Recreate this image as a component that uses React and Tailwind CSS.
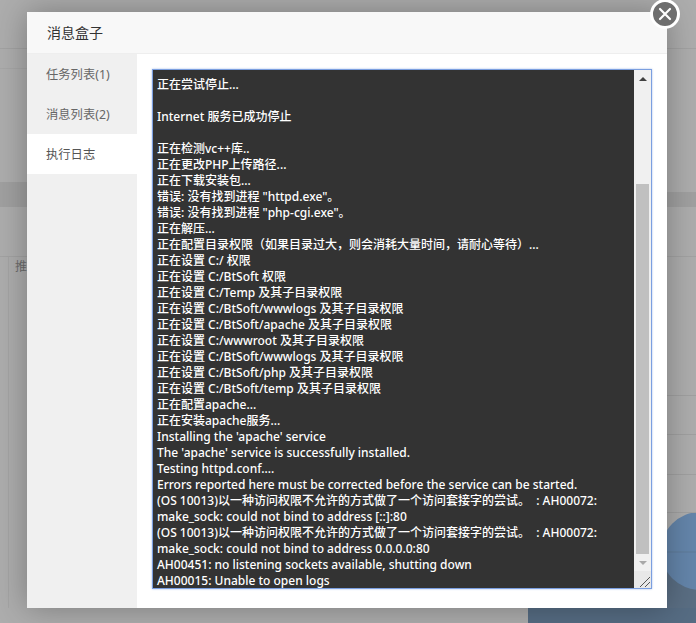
const lines = [
  "正在尝试停止...",
  "",
  "Internet 服务已成功停止",
  "",
  "正在检测vc++库..",
  "正在更改PHP上传路径...",
  "正在下载安装包...",
  "错误: 没有找到进程 \"httpd.exe\"。",
  "错误: 没有找到进程 \"php-cgi.exe\"。",
  "正在解压...",
  "正在配置目录权限（如果目录过大，则会消耗大量时间，请耐心等待）...",
  "正在设置 C:/ 权限",
  "正在设置 C:/BtSoft 权限",
  "正在设置 C:/Temp 及其子目录权限",
  "正在设置 C:/BtSoft/wwwlogs 及其子目录权限",
  "正在设置 C:/BtSoft/apache 及其子目录权限",
  "正在设置 C:/wwwroot 及其子目录权限",
  "正在设置 C:/BtSoft/wwwlogs 及其子目录权限",
  "正在设置 C:/BtSoft/php 及其子目录权限",
  "正在设置 C:/BtSoft/temp 及其子目录权限",
  "正在配置apache...",
  "正在安装apache服务...",
  "Installing the 'apache' service",
  "The 'apache' service is successfully installed.",
  "Testing httpd.conf....",
  "Errors reported here must be corrected before the service can be started.",
  "(OS 10013)以一种访问权限不允许的方式做了一个访问套接字的尝试。  : AH00072:",
  "make_sock: could not bind to address [::]:80",
  "(OS 10013)以一种访问权限不允许的方式做了一个访问套接字的尝试。  : AH00072:",
  "make_sock: could not bind to address 0.0.0.0:80",
  "AH00451: no listening sockets available, shutting down",
  "AH00015: Unable to open logs",
];

function Backdrop() {
  return (
    <div className="flex h-full flex-col">
      <div className="flex min-h-0 flex-1 justify-between">
        <div className="flex w-[27px] flex-col">
          <div className="h-[49px] shrink-0 border-b border-[#a2a2a2]" />
          <div className="h-[20px] shrink-0 border-b border-[#a6a6a6]" />
          <div className="h-[113px] shrink-0" />
          <div className="h-[25px] shrink-0 bg-[#a0a0a0]" />
          <div className="h-[50px] shrink-0 border-b border-[#a2a2a2]" />
          <div className="flex flex-1">
            <div className="w-[9px] shrink-0 border-r border-[#a4a4a4]" />
            <div className="overflow-hidden whitespace-nowrap pl-[6px] pt-[1px] text-[12px] text-[#6c6c6c]">推</div>
          </div>
        </div>
        <div className="flex w-[29px] flex-col">
          <div className="h-[49px] shrink-0 border-b border-[#a2a2a2]" />
          <div className="h-[143px] shrink-0" />
          <div className="h-[15px] shrink-0 bg-[#a0a0a0]" />
          <div className="h-[50px] shrink-0 border-b border-[#a2a2a2]" />
          <div className="h-[139px] shrink-0 border-b border-[#a0a0a0]" />
          <div className="h-[39px] shrink-0 border-b border-[#a0a0a0]" />
          <div className="h-[40px] shrink-0 border-b border-[#a0a0a0]" />
          <div className="h-[38px] shrink-0 border-b border-[#a0a0a0]" />
          <svg className="block flex-1" width="29" viewBox="0 0 29 95" preserveAspectRatio="xMinYMin slice">
            <rect x="0" y="18" width="29" height="77" fill="#5a6e83" />
            <circle cx="33" cy="38" r="39" fill="#6485aa" />
            <path d="M0 39H29" stroke="#5f7a99" strokeWidth="1" />
          </svg>
        </div>
      </div>
      <div className="flex h-[15px] shrink-0">
        <div className="w-[528px] shrink-0" />
        <div className="flex-1 bg-[#566c83]" />
      </div>
    </div>
  );
}

export default function App() {
  return (
    <div className="relative h-[623px] w-[696px] overflow-hidden bg-[#adadad] font-['Noto_Sans','Noto_Sans_CJK_SC',sans-serif]">
      <Backdrop />
      <div className="absolute inset-0 pl-[27px] pt-[12px]">
        <div className="relative flex h-[596px] w-[640px] flex-col bg-white shadow-[0_0_30px_rgba(0,0,0,0.3)]">
          <div className="flex h-[42px] shrink-0 items-center border-b border-[#eeeeee] bg-[#f8f8f8] pl-[20px] text-[14px] text-[#333333]">
            消息盒子
          </div>
          <div className="flex min-h-0 flex-1">
            <div className="w-[110px] shrink-0 bg-[#f0f0f0] text-[12.3px] text-[#666666]">
              <div className="flex h-[40px] items-center pl-[19px] pt-[2px]">任务列表(1)</div>
              <div className="flex h-[40px] items-center pl-[19px] pt-[2px]">消息列表(2)</div>
              <div className="flex h-[40px] items-center bg-white pl-[19px] pt-[2px] text-[#555555]">执行日志</div>
            </div>
            <div className="flex-1 pl-[15px] pt-[15px]">
              <div className="flex h-[520px] w-[500px] border border-[#7b9fe0] bg-[#333333] shadow-[0_0_2px_#a9bfea]">
                <div className="min-w-0 flex-1 overflow-hidden pl-[4px] pt-[7px] text-[12px] font-medium leading-[16px] text-white">
                  {lines.map((l, i) => (
                    <div key={i} className="h-[16px] whitespace-pre">{l}</div>
                  ))}
                </div>
                <div className="flex w-[17px] shrink-0 flex-col bg-[#f0f0f0]">
                  <div className="flex h-[17px] shrink-0 items-center justify-center">
                    <div className="h-0 w-0 border-x-[4px] border-b-[4px] border-x-transparent border-b-[#404040]" />
                  </div>
                  <div className="h-[97px] shrink-0" />
                  <div className="mx-auto h-[370px] w-[13px] shrink-0 bg-[#c0c0c0]" />
                  <div className="flex h-[17px] shrink-0 items-center justify-center">
                    <div className="h-0 w-0 border-x-[4px] border-t-[4px] border-x-transparent border-t-[#a8a8a8]" />
                  </div>
                  <div className="flex flex-1 items-end justify-end bg-[#e8e8e8]">
                    <svg width="14" height="14" viewBox="0 0 14 14">
                      <path d="M3 13L13 3M8 13L13 8" stroke="#555" strokeWidth="1" fill="none" />
                    </svg>
                  </div>
                </div>
              </div>
            </div>
          </div>
          <div className="absolute right-[-13px] top-[-13px] flex h-[30px] w-[30px] items-center justify-center rounded-full border-[3px] border-white bg-[#6e6e6e]">
            <svg width="16" height="16" viewBox="0 0 16 16">
              <path d="M3 3L13 13M13 3L3 13" stroke="white" strokeWidth="2.2" strokeLinecap="round" fill="none" />
            </svg>
          </div>
        </div>
      </div>
    </div>
  );
}
